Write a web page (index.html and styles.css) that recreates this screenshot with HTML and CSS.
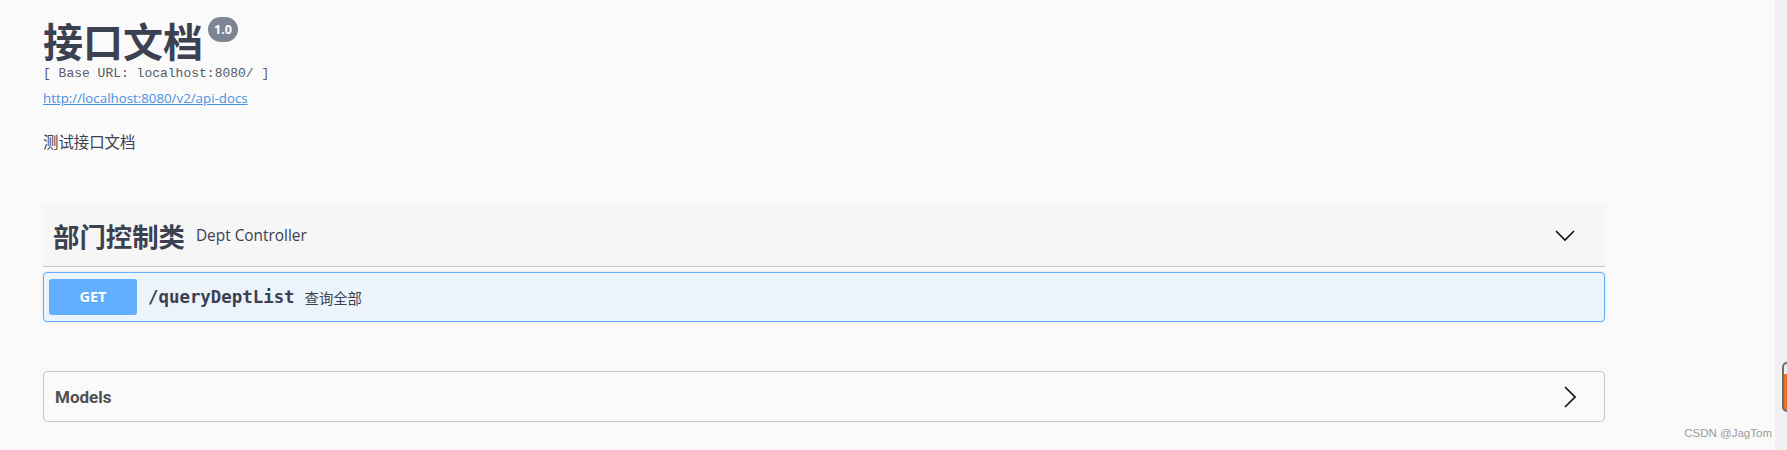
FILE: index.html
```html
<!DOCTYPE html>
<html lang="zh-CN">
<head>
<meta charset="utf-8">
<title>接口文档</title>
<link rel="stylesheet" href="styles.css">
</head>
<body>
<div class="page">
  <div class="wrapper">
    <div class="info">
      <h2 class="title"><span class="title-text">接口文档</span><span class="version">1.0</span></h2>
      <pre class="base-url">[ Base URL: localhost:8080/ ]</pre>
      <a class="url" href="#">http://localhost:8080/v2/api-docs</a>
      <div class="description">测试接口文档</div>
    </div>

    <div class="tag-section">
      <h4 class="tag-header">
        <span class="tag-name">部门控制类</span>
        <small class="tag-desc">Dept Controller</small>
        <svg class="chev-down" width="20" height="12" viewBox="0 0 20 12"><path d="M1 1 L10 10 L19 1" fill="none" stroke="#111" stroke-width="1.6"/></svg>
      </h4>
      <div class="opblock">
        <span class="method">GET</span>
        <span class="path">/queryDeptList</span>
        <span class="summary">查询全部</span>
      </div>
    </div>

    <section class="models">
      <h4 class="models-title">Models</h4>
      <svg class="chev-right" width="12" height="22" viewBox="0 0 12 22"><path d="M1 1 L11 11 L1 21" fill="none" stroke="#111" stroke-width="1.6"/></svg>
    </section>
  </div>
  <div class="scroll-strip"></div>
  <div class="side-tab"></div>
  <div class="watermark">CSDN @JagTom</div>
</div>
</body>
</html>
```

FILE: styles.css
```css
html, body {
  margin: 0;
  padding: 0;
  background: #fafafa;
  overflow: hidden;
}

.page {
  position: relative;
  width: 1787px;
  height: 450px;
  background: #fafafa;
  font-family: "Open Sans", "Noto Sans CJK SC", sans-serif;
  color: #3b4151;
}

.wrapper {
  width: 1562px;
  padding-left: 43px;
}

.info {
  padding-top: 20px;
}

.title {
  display: flex;
  align-items: flex-start;
  margin: 0;
  height: 40px;
}

.title-text {
  font-family: "Noto Sans CJK SC", sans-serif;
  font-size: 40px;
  line-height: 40px;
  font-weight: 700;
  color: #3b4151;
}

.version {
  margin-top: -3px;
  margin-left: 5px;
  background: #7d8492;
  color: #fff;
  font-family: "Open Sans", sans-serif;
  font-size: 12.5px;
  font-weight: 700;
  line-height: 25px;
  height: 25px;
  padding: 0 6px;
  border-radius: 13px;
}

.base-url {
  margin: 6px 0 0;
  font-family: "Liberation Mono", monospace;
  font-size: 13px;
  line-height: 16px;
  color: #555a66;
}

.url {
  display: block;
  margin-top: 7px;
  font-family: "Open Sans", sans-serif;
  font-size: 13.3px;
  line-height: 18px;
  color: #4990e2;
  text-decoration: underline;
  width: max-content;
}

.description {
  margin-top: 25px;
  font-family: "Noto Sans CJK SC", sans-serif;
  font-size: 15.4px;
  line-height: 18px;
  color: #3b4151;
}

.tag-section {
  margin-top: 55px;
}

.tag-header {
  display: flex;
  align-items: center;
  margin: 0;
  height: 61px;
  background: #f6f6f6;
  border-bottom: 1px solid #c4c5c9;
  padding-left: 10px;
}

.tag-name {
  font-family: "Noto Sans CJK SC", sans-serif;
  font-size: 26.4px;
  font-weight: 700;
  color: #3b4151;
  line-height: 30px;
}

.tag-desc {
  margin-left: 11px;
  font-family: "Open Sans", sans-serif;
  font-size: 15.4px;
  font-weight: 400;
  color: #3b4151;
  flex: 1;
}

.chev-down {
  margin-right: 30px;
}

.opblock {
  display: flex;
  align-items: center;
  margin-top: 5px;
  height: 48px;
  padding: 0 5px;
  border: 1px solid #61affe;
  border-radius: 4px;
  background: #ebf3fb;
  box-shadow: 0 0 3px rgba(0,0,0,.12);
}

.method {
  width: 88px;
  height: 36px;
  line-height: 36px;
  text-align: center;
  background: #61affe;
  border-radius: 3px;
  color: #fff;
  font-family: "Open Sans", sans-serif;
  font-weight: 700;
  font-size: 14.5px;
  text-shadow: 0 1px 0 rgba(0,0,0,.1);
}

.path {
  margin-left: 11px;
  font-family: "DejaVu Sans Mono", monospace;
  font-size: 17.4px;
  font-weight: 700;
  color: #3b4151;
}

.summary {
  margin-left: 10px;
  font-family: "Noto Sans CJK SC", sans-serif;
  font-size: 14.3px;
  color: #3b4151;
}

.models {
  display: flex;
  align-items: center;
  justify-content: space-between;
  margin-top: 49px;
  height: 49px;
  border: 1px solid #c4c5c9;
  border-radius: 4px;
  padding: 0 28px 0 11px;
}

.models-title {
  margin: 0;
  font-family: "Roboto", sans-serif;
  font-size: 17px;
  font-weight: 700;
  color: #505050;
}

.scroll-strip {
  position: absolute;
  top: 0;
  right: 0;
  width: 12px;
  height: 450px;
  background: #f0f0f0;
}

.side-tab {
  position: absolute;
  left: 1782px;
  top: 362px;
  width: 12px;
  height: 46px;
  border: 2px solid #6b6b6b;
  border-radius: 5px;
  background: linear-gradient(#f0f0f0 0 10px, #e8702a 10px);
}

.watermark {
  position: absolute;
  right: 15px;
  top: 427px;
  font-family: "Liberation Sans", sans-serif;
  font-size: 11.5px;
  color: #9a9a9a;
}
```
